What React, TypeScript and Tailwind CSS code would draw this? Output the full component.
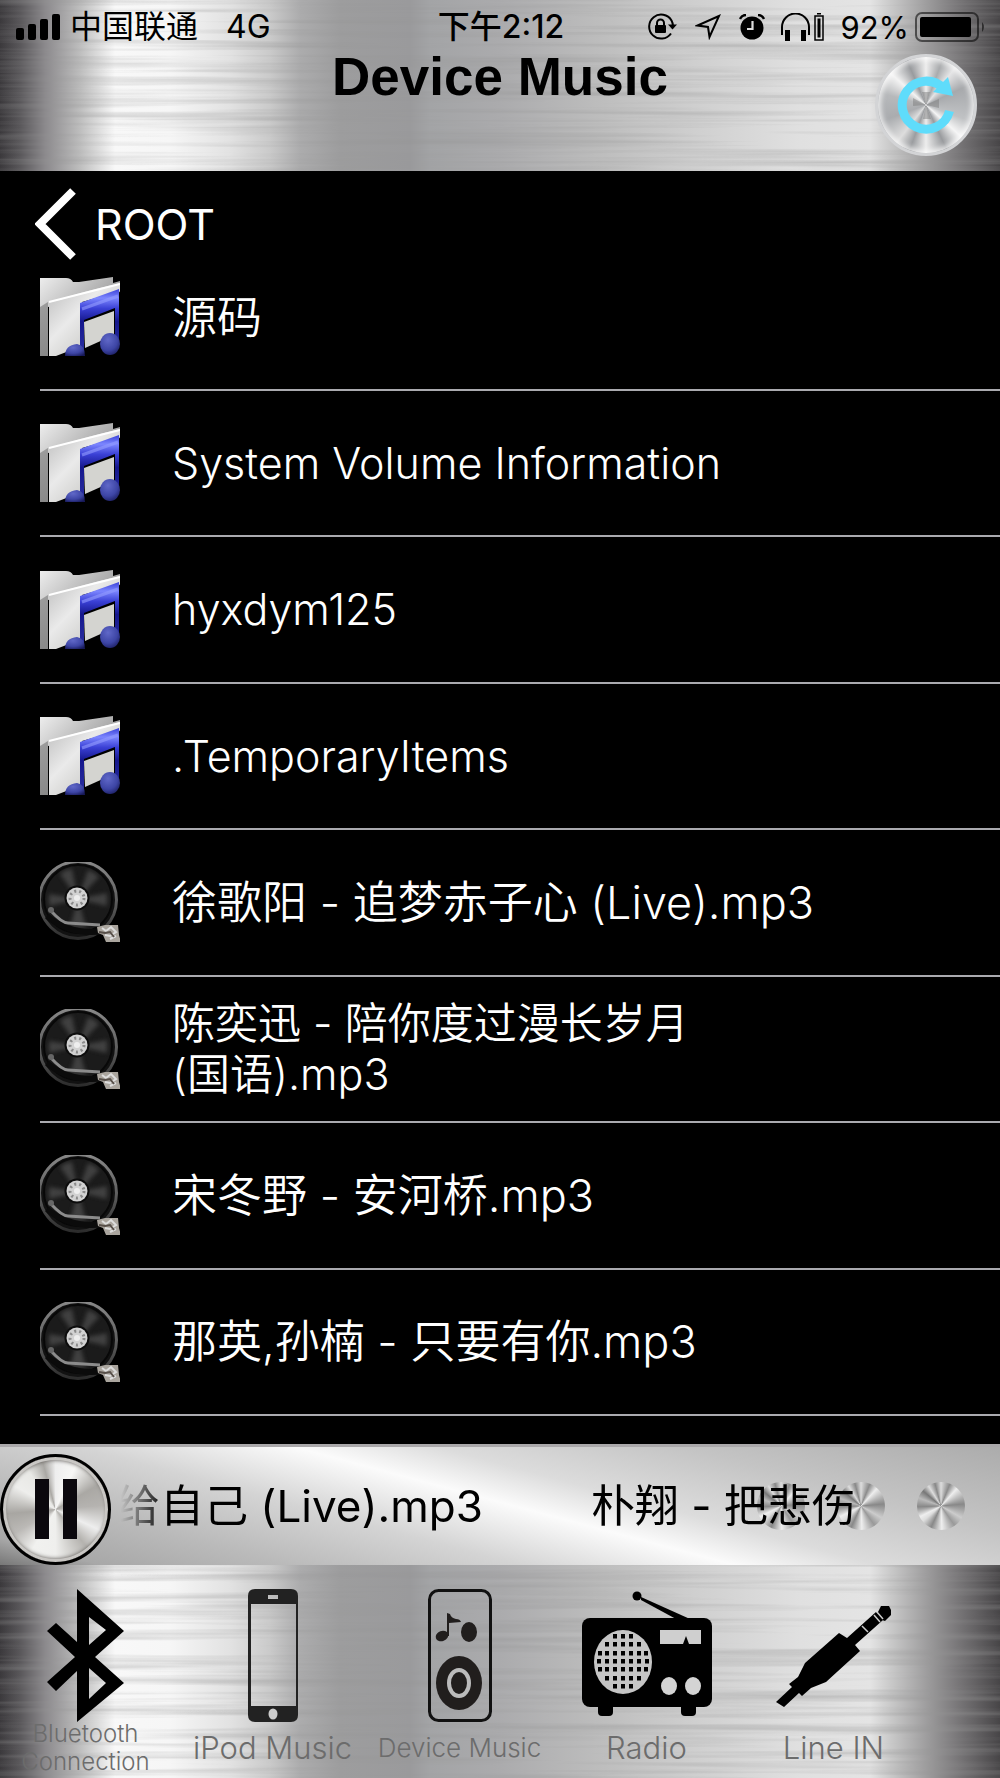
import React, { useId } from "react";

const SANS = "font-[Inter,'Noto_Sans_CJK_SC',sans-serif]";

function BrushedMetal({ seed }: { seed: number }) {
  const id = useId();
  return (
    <svg className="absolute inset-0 h-full w-full" preserveAspectRatio="none" viewBox="0 0 1000 200" aria-hidden="true">
      <defs>
        <linearGradient id={`${id}g`} x1="0" x2="1" y1="0" y2="0">
          <stop offset="0" stopColor="#3b393c" />
          <stop offset=".02" stopColor="#59575a" />
          <stop offset=".045" stopColor="#8b898c" />
          <stop offset=".08" stopColor="#bebebe" />
          <stop offset=".115" stopColor="#f8f8f8" />
          <stop offset=".17" stopColor="#f6f6f6" />
          <stop offset=".23" stopColor="#e2e2e2" />
          <stop offset=".27" stopColor="#cacaca" />
          <stop offset=".3" stopColor="#acacad" />
          <stop offset=".34" stopColor="#9d9d9e" />
          <stop offset=".41" stopColor="#9a9a9c" />
          <stop offset=".43" stopColor="#a3a4a6" />
          <stop offset=".5" stopColor="#ababad" />
          <stop offset=".6" stopColor="#bdbdbd" />
          <stop offset=".7" stopColor="#d0d0d0" />
          <stop offset=".8" stopColor="#e0e0e0" />
          <stop offset=".87" stopColor="#e4e4e4" />
          <stop offset=".89" stopColor="#cacaca" />
          <stop offset=".93" stopColor="#9a999a" />
          <stop offset=".96" stopColor="#767476" />
          <stop offset="1" stopColor="#474547" />
        </linearGradient>
        <filter id={`${id}n`} x="0" y="0" width="100%" height="100%">
          <feTurbulence type="fractalNoise" baseFrequency="0.003 0.14" numOctaves="3" seed={seed} />
          <feColorMatrix values="0 0 0 0 .3  0 0 0 0 .3  0 0 0 0 .3  .9 0 0 0 -.38" />
        </filter>
      </defs>
      <rect width="1000" height="200" fill={`url(#${id}g)`} />
      <rect width="1000" height="200" filter={`url(#${id}n)`} />
    </svg>
  );
}

function StatusBar() {
  return (
    <div className={`relative grid h-[54px] grid-cols-[1fr_auto_1fr] items-center pl-4 pr-3.5 text-[32px] leading-none text-black ${SANS}`}>
      <div className="flex items-center">
        <svg width="44" height="26" viewBox="0 0 44 26" aria-label="Signal">
          <rect y="14" width="8" height="12" rx="2" />
          <rect x="12" y="10" width="8" height="16" rx="2" />
          <rect x="24" y="5" width="8" height="21" rx="2" />
          <rect x="36" width="8" height="26" rx="2" />
        </svg>
        <span className="ml-2.5">中国联通</span>
        <span className="ml-7">4G</span>
      </div>
      <div className="font-medium">下午2:12</div>
      <div className="flex items-center justify-end">
        <svg width="30" height="28" viewBox="0 0 30 28" aria-label="Rotation lock">
          <path d="M24.5 7.5A12 12 0 1 0 24 20.500M24.500 7.500A12 12 0 0 1 26 13" fill="none" stroke="#000" strokeWidth="2" />
          <path d="M21 11.500h9l-4.500 5z" />
          <rect x="8" y="12" width="11" height="8" rx="1" />
          <path d="M10 13V10a3.500 3.500 0 0 1 7 0v3" fill="none" stroke="#000" strokeWidth="2" />
        </svg>
        <svg className="ml-[18px]" width="26" height="26" viewBox="0 0 26 26" aria-label="Location">
          <path d="M24 2L2.500 11.500l10.500 1.500L14.500 23z" fill="none" stroke="#000" strokeWidth="2" />
        </svg>
        <svg className="ml-[18px]" width="26" height="26" viewBox="0 0 26 26" aria-label="Alarm">
          <circle cx="13" cy="14" r="11.500" />
          <path d="M1 5Q3 1 7 1M25 5Q23 1 19 1" fill="none" stroke="#000" strokeWidth="2.500" />
          <path d="M13.500 7v8H8" fill="none" stroke="#ddd" strokeWidth="2.200" />
        </svg>
        <svg className="ml-4" width="43" height="28" viewBox="0 0 43 28" aria-label="Headphones">
          <path d="M1 22v-8a13 13 0 0 1 27 0v8" fill="none" stroke="#000" strokeWidth="2" />
          <rect x="4" y="17" width="5" height="11" />
          <rect x="20" y="17" width="5" height="11" />
          <rect x="34" y="3" width="8" height="24" fill="none" stroke="#000" strokeWidth="1.500" />
          <rect x="36.500" y="5.500" width="3" height="19" />
          <rect x="36" width="4" height="1.500" />
        </svg>
        <span className="ml-4 text-[31px] leading-none">92%</span>
        <svg className="ml-1.5" width="71" height="30" viewBox="0 0 71 30" aria-label="Battery">
          <rect x="1" y="1" width="62" height="28" rx="6" fill="none" stroke="#000" strokeOpacity=".55" strokeWidth="2" />
          <rect x="5" y="5" width="51" height="20" rx="2" />
          <path d="M67 10q4 5 0 10z" opacity=".55" />
        </svg>
      </div>
    </div>
  );
}

function Header() {
  return (
    <header className="relative h-[171px] shrink-0 overflow-hidden">
      <BrushedMetal seed={4} />
      <StatusBar />
      <div className="relative grid grid-cols-[1fr_auto_1fr] items-start pr-[23px]">
        <h1 className="col-start-2 ml-[23px] font-['Liberation_Sans',sans-serif] text-[53px] font-bold leading-[46px] text-black">Device Music</h1>
        <button
          type="button"
          aria-label="Refresh"
          className="grid size-[102px] place-items-center justify-self-end rounded-full border-[3px] border-[#d3d4d6] bg-[conic-gradient(#eee,#a9abad_20deg,#e5e5e6_38deg,#a7a9ac_65deg,#c0c2c4_110deg,#f5f5f5_132deg,#999b9e_155deg,#ededed_180deg,#9b9da0_200deg,#ddd_218deg,#aaacaf_250deg,#b7b9bb_285deg,#f3f3f3_312deg,#999b9e_337deg,#eee)] shadow-[inset_0_0_5px_3px_#ffffffb0]"
        >
          <svg width="62" height="62" viewBox="0 0 62 62" aria-hidden="true">
            <path d="M31 31L27 18h8zM31 31l13-6v9zM31 31l5 14h-8zM31 31l-13-7v8z" fill="#777" opacity=".45" />
            <path d="M49 15A24 24 0 1 0 54.500 37" fill="none" stroke="#5fdcfb" strokeWidth="9" />
            <path d="M53 3l5 19-20-4z" fill="#5fdcfb" />
          </svg>
        </button>
      </div>
    </header>
  );
}

function FolderIcon() {
  const id = useId();
  return (
    <svg width="80" height="80" viewBox="0 0 80 80" aria-hidden="true">
      <defs>
        <linearGradient id={`${id}b`} x1="0" x2="1" y1="0" y2="1">
          <stop offset="0" stopColor="#eee" />
          <stop offset="1" stopColor="#666" />
        </linearGradient>
        <linearGradient id={`${id}f`} x1="0" x2="1" y1="0" y2="1">
          <stop offset="0" stopColor="#bbb" />
          <stop offset=".4" stopColor="#eaeaea" />
          <stop offset="1" stopColor="#b5b5b0" />
        </linearGradient>
        <linearGradient id={`${id}n`} x1="0" x2="0" y1="0" y2="1">
          <stop offset="0" stopColor="#3a42d8" />
          <stop offset=".14" stopColor="#7c86ff" />
          <stop offset=".3" stopColor="#3a40d5" />
          <stop offset=".5" stopColor="#15178c" />
          <stop offset="1" stopColor="#2b30a2" />
        </linearGradient>
        <radialGradient id={`${id}r`} cx=".4" cy=".3" r=".8">
          <stop offset="0" stopColor="#6068c8" />
          <stop offset=".6" stopColor="#3d45a5" />
          <stop offset="1" stopColor="#171958" />
        </radialGradient>
      </defs>
      <path d="M0 1h26q5 0 7 4h6L73 0v6l7-2v11L8 30v49H0z" fill={`url(#${id}b)`} />
      <path d="M0 30l8-5v54H0z" fill="#777" opacity=".6" />
      <path d="M9 25Q42 15 80 6v8L42 25v44L16 79H9z" fill={`url(#${id}f)`} />
      <path d="M9 25L80 7" stroke="#fff" strokeWidth="2" />
      <path d="M44 45L74 34v24L45 71z" fill="#d4d4d0" />
      <path d="M40 26L79 12v53h-4V31L44 43v34h-4z" fill={`url(#${id}n)`} />
      <path d="M42 32L78 19" stroke="#949dff" strokeWidth="3" opacity=".6" />
      <path d="M25 79q0-11 12-12 8 1 8 12z" fill={`url(#${id}r)`} />
      <ellipse cx="70" cy="67" rx="10" ry="11" fill={`url(#${id}r)`} />
    </svg>
  );
}

function RecordIcon() {
  const id = useId();
  return (
    <svg width="80" height="80" viewBox="0 0 80 80" aria-hidden="true">
      <defs>
        <linearGradient id={id} x1="0" x2="0" y1="0" y2="1">
          <stop offset="0" stopColor="#888" />
          <stop offset=".5" stopColor="#606060" />
          <stop offset="1" stopColor="#2c2c2c" />
        </linearGradient>
        <clipPath id={`${id}c`}><rect width="80" height="80" /></clipPath>
        <filter id={`${id}s`}><feGaussianBlur stdDeviation="2" /></filter>
      </defs>
      <g clipPath={`url(#${id}c)`}>
        <circle cx="38" cy="38" r="38.500" fill="#121212" stroke={`url(#${id})`} strokeWidth="3" />
        <circle cx="38" cy="37" r="34" fill="#1b1b1b" stroke="#080808" strokeWidth="2" />
        <path filter={`url(#${id}s)`} d="M38 37L20 12Q26 7 32 7zM38 37L48 8q6 2 11 7zM38 37L67 31v13zM38 37L9 32v12zM38 37L30 65h16z" fill="#555" opacity=".65" />
        <circle cx="37" cy="36" r="12.500" fill="#0c0c0c" />
        <circle cx="37" cy="36" r="10.500" fill="#d2d2d2" />
        <circle cx="37" cy="36" r="7" fill="none" stroke="#8b8b8b" strokeWidth="3" strokeDasharray="2 3" />
        <circle cx="37" cy="36" r="3" fill="#eee" />
        <path d="M7 54q23 20 58 15" fill="none" stroke="#0b0b0b" strokeWidth="6" />
        <path d="M11 49Q22 61 28 61L60 63" fill="none" stroke="#8c8c8c" strokeWidth="3" />
        <circle cx="11" cy="48" r="3" fill="#666" />
        <path d="M57 65l8-2h13l1 10 2 7H66l-3-7-5-2z" fill="#aaa59e" />
        <path d="M62 66l4 3 5-4 5 5-6 4-5-1M70 77l6-3" fill="none" stroke="#ddd" strokeWidth="2" />
        <path d="M59 70l6 1 5-1 4 5" fill="none" stroke="#574f49" strokeWidth="2" />
      </g>
    </svg>
  );
}

const LATIN = "text-[43px] leading-[51px] font-light";
const HAN = "text-[45px] leading-[51px] font-[350]";
const HAN_WRAPPED = "text-[43px] leading-[51px] font-[350]";

const entries = [
  { name: "源码", folder: true, text: HAN },
  { name: "System Volume Information", folder: true, text: LATIN },
  { name: "hyxdym125", folder: true, text: LATIN },
  { name: ".TemporaryItems", folder: true, text: LATIN },
  { name: "徐歌阳 - 追梦赤子心 (Live).mp3", folder: false, text: HAN },
  { name: "陈奕迅 - 陪你度过漫长岁月 (国语).mp3", folder: false, text: HAN_WRAPPED },
  { name: "宋冬野 - 安河桥.mp3", folder: false, text: HAN },
  { name: "那英,孙楠 - 只要有你.mp3", folder: false, text: HAN },
];

function FileList() {
  return (
    <main className={`flex flex-1 flex-col bg-black pb-7 text-white ${SANS}`}>
      <button type="button" className="flex h-[106px] shrink-0 items-center gap-[18px] pl-[35px] text-left text-[43px] leading-none">
        <svg width="42" height="72" viewBox="0 0 42 72" aria-hidden="true">
          <path d="M38 3L5 36l33 33" fill="none" stroke="#fff" strokeWidth="8" />
        </svg>
        ROOT
      </button>
      <ul className="flex flex-1 flex-col pl-10">
        {entries.map((entry, i) => (
          <li
            key={entry.name}
            className={
              i === 0
                ? "flex h-[114px] shrink-0 items-start border-b-2 border-[#aaaaaf]"
                : "flex min-h-[146px] flex-1 basis-0 items-center border-b-2 border-[#aaaaaf]"
            }
          >
            <button type="button" className="flex w-full items-center text-left">
              <span className="w-[132px] shrink-0">{entry.folder ? <FolderIcon /> : <RecordIcon />}</span>
              <span className={`max-w-[660px] break-keep ${entry.text}`}>{entry.name}</span>
            </button>
          </li>
        ))}
      </ul>
    </main>
  );
}

function Knob() {
  return (
    <span className="size-12 rounded-full bg-[conic-gradient(#ddd,#8b8b8b_22deg,#eee_42deg,#888_85deg,#ccc_120deg,#999_145deg,#eee_178deg,#888_205deg,#ddd_230deg,#eee_243deg,#888_268deg,#bbb_290deg,#777_310deg,#ddd_328deg,#888_345deg,#ddd)]" />
  );
}

function NowPlaying() {
  return (
    <section aria-label="Now playing" className="flex h-[121px] shrink-0 items-center border-t-[3px] border-[#aaa8aa] bg-[linear-gradient(15deg,#777_0%,#a8a8a8_7%,#bababa_20%,#d4d4d4_36%,#fbfbfb_51%,#dcdcdc_61%,#c4c4c4_78%,#acacac_100%)]">
      <button
        type="button"
        aria-label="Pause"
        className="mt-1.5 grid size-[111px] shrink-0 place-items-center rounded-full border-[3px] border-black bg-[conic-gradient(#eee,#f7f7f5_25deg,#aaa8a4_60deg,#b5b3b0_85deg,#eee_115deg,#b5b3af_140deg,#efefed_180deg,#f1f1ef_210deg,#bbb9b6_240deg,#a8a6a2_265deg,#eeeeec_300deg,#e8e8e5_325deg,#aaa8a4_345deg,#eee)] shadow-[inset_0_0_0_3px_#c9c7c4,inset_0_3px_4px_#55514d,inset_0_-3px_4px_#55514d]"
      >
        <svg width="42" height="60" viewBox="0 0 42 60" aria-hidden="true">
          <path d="M0 0h14v60H0zM28 0h14v60H28z" fill="#0b080d" />
        </svg>
      </button>
      <div className="grid min-w-0 flex-1 items-center">
        <div className="col-start-1 row-start-1 flex justify-end gap-8 pr-[35px]">
          <Knob />
          <Knob />
          <Knob />
        </div>
        <div className={`relative col-start-1 row-start-1 ml-[5px] flex gap-[108px] overflow-hidden whitespace-nowrap text-[44px] leading-[58px] text-black [mask-image:linear-gradient(to_right,transparent_5px,black_50px)] ${SANS}`}>
          <span>给自己 (Live).mp3</span>
          <span>朴翔 - 把悲伤</span>
        </div>
      </div>
    </section>
  );
}

function BluetoothIcon() {
  return (
    <svg width="77" height="133" viewBox="0 0 77 133" aria-hidden="true">
      <path fillRule="evenodd" d="M30 0L77 42 48 68l29 26-47 39V82L9 102l-9-9 28-25L0 42l9-8 21 19zM42 28v28l17-15zM42 79v31l17-16z" />
    </svg>
  );
}

function PhoneIcon() {
  return (
    <svg width="50" height="133" viewBox="0 0 50 133" aria-hidden="true">
      <path fillRule="evenodd" fill="#222" d="M7 0h36q7 0 7 7v119q0 7-7 7H7q-7 0-7-7V7q0-7 7-7zM3 15v102h45V15zM20 6v4h10V6z" />
      <ellipse cx="25" cy="125" rx="4.500" ry="5.500" fill="#ccc" />
    </svg>
  );
}

function SpeakerIcon() {
  return (
    <svg width="64" height="133" viewBox="0 0 64 133" aria-hidden="true">
      <rect x="1.500" y="1.500" width="61" height="130" rx="9" fill="none" stroke="#111" strokeWidth="3" />
      <g fill="#211e1d">
        <ellipse cx="31" cy="94" rx="23" ry="27" />
        <ellipse cx="41" cy="43" rx="8" ry="10" />
        <ellipse cx="14" cy="47" rx="6.500" ry="5" transform="rotate(-20 14 47)" />
        <path d="M19 47V24l3 1q1 4 6 5 4 0 5 3l-12 1v13z" />
      </g>
      <ellipse cx="31" cy="94" rx="10" ry="13" fill="none" stroke="#bbb" strokeWidth="4" />
    </svg>
  );
}

const grilleRows = [
  { y: 47, xs: [33, 41, 49] },
  { y: 55, xs: [25, 33, 41, 49, 57] },
  { y: 64, xs: [18, 25, 33, 41, 49, 57, 64] },
  { y: 72, xs: [17, 25, 33, 41, 49, 57, 65] },
  { y: 80, xs: [18, 25, 33, 41, 49, 57, 64] },
  { y: 89, xs: [25, 33, 41, 49, 57] },
  { y: 97, xs: [33, 41, 49] },
];

function RadioIcon() {
  return (
    <svg width="130" height="133" viewBox="0 0 130 133" aria-hidden="true">
      <circle cx="55" cy="7" r="4.500" />
      <path d="M59 8L108 30h-14L59 11z" />
      <rect y="29" width="130" height="89" rx="8" />
      <rect x="16" y="112" width="15" height="15" rx="4" />
      <rect x="99" y="112" width="15" height="15" rx="4" />
      <ellipse cx="41" cy="73" rx="29" ry="32" fill="#c5c5c5" />
      {grilleRows.map((row) => row.xs.map((x) => <rect key={`${x}-${row.y}`} x={x - 2} y={row.y - 2} width="4" height="4.500" />))}
      <path d="M78 41h41v14h-12l-3-8-3 8H78z" fill="#cfcfcf" />
      <ellipse cx="87" cy="97" rx="8" ry="9" fill="#d4d4d4" />
      <ellipse cx="111" cy="97" rx="8" ry="9" fill="#d4d4d4" />
    </svg>
  );
}

function JackIcon() {
  return (
    <svg width="115" height="133" viewBox="0 0 115 133" aria-hidden="true">
      <path d="M0 113l16-15-3-3 9-7 7-14 34-30 8 5 29-26 7 8-28 25 5 6-34 31-15 6-9 8-3-3-15 14z" />
      <path d="M105 17h8l2 4v5l-6 6-6-2-2-5z" />
      <path d="M86 37l6 6M98 26l6 7M101 23l6 7" stroke="#ccc" strokeWidth="1.500" />
    </svg>
  );
}

const tabs = [
  { label: "Bluetooth Connection", icon: <BluetoothIcon />, text: "w-[140px] whitespace-normal text-center text-[24px] leading-7 -mt-0.5" },
  { label: "iPod Music", icon: <PhoneIcon />, text: "text-[31px] leading-8 pt-2.5" },
  { label: "Device Music", icon: <SpeakerIcon />, text: "text-[26px] leading-8 pt-2.5" },
  { label: "Radio", icon: <RadioIcon />, text: "text-[31px] leading-8 pt-2.5" },
  { label: "Line IN", icon: <JackIcon />, text: "text-[31px] leading-8 pt-2.5" },
];

function TabBar() {
  return (
    <nav aria-label="Sources" className="relative h-[213px] shrink-0 overflow-hidden">
      <BrushedMetal seed={11} />
      <div className={`relative -ml-2 mr-[73px] grid grid-cols-5 pt-6 font-light text-[#6c6c6c] ${SANS}`}>
        {tabs.map((tab) => (
          <button key={tab.label} type="button" className="flex min-w-0 flex-col items-center whitespace-nowrap">
            {tab.icon}
            <span className={tab.text}>{tab.label}</span>
          </button>
        ))}
      </div>
    </nav>
  );
}

export default function App() {
  return (
    <div className="flex min-h-screen flex-col bg-black">
      <Header />
      <FileList />
      <NowPlaying />
      <TabBar />
    </div>
  );
}
